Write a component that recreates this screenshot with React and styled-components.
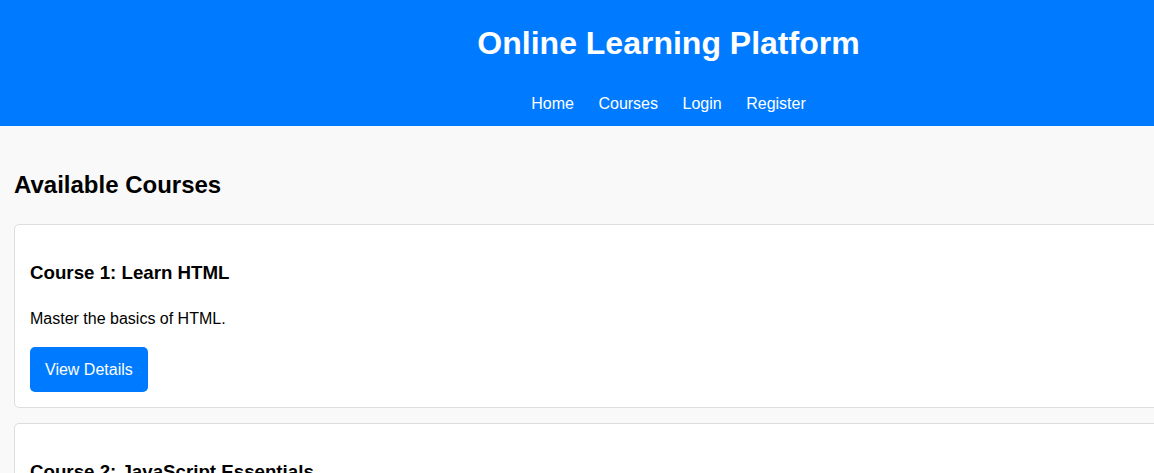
import styled, { createGlobalStyle } from "styled-components";

const GlobalStyle = createGlobalStyle`
  html, body {
    margin: 0;
    padding: 0;
    overflow-x: hidden;
    background: #f9f9f9;
  }
  body {
    font-family: "Liberation Sans", Arial, sans-serif;
    color: #000;
  }
`;

const Page = styled.div`
  width: 1337px;
  min-height: 100vh;
  background: #f9f9f9;
`;

const Header = styled.header`
  background: #007bff;
  color: #fff;
  text-align: center;
  padding: 25px 0 13px;
`;

const Title = styled.h1`
  margin: 0;
  font-size: 32px;
  line-height: 37px;
  font-weight: bold;
`;

const Nav = styled.nav`
  display: flex;
  justify-content: center;
  gap: 24.5px;
  margin-top: 33px;
  line-height: 18px;
`;

const NavLink = styled.a`
  color: #fff;
  text-decoration: none;
  font-size: 16px;
`;

const Main = styled.main`
  padding: 45px 14px 0;
`;

const SectionTitle = styled.h2`
  margin: 0 0 25px;
  font-size: 24px;
  line-height: 28px;
  font-weight: bold;
`;

const Card = styled.div`
  background: #fff;
  border: 1px solid #ddd;
  border-radius: 5px;
  padding: 15px;
  margin-bottom: 15px;
`;

const CourseTitle = styled.h3`
  margin: 22px 0 0;
  font-size: 18.72px;
  line-height: 22px;
  font-weight: bold;
`;

const Description = styled.p`
  margin: 26px 0 19px;
  font-size: 16px;
`;

const Button = styled.a`
  display: inline-block;
  background: #007bff;
  color: #fff;
  text-decoration: none;
  font-size: 16px;
  line-height: 19px;
  padding: 13px 15px;
  border-radius: 5px;
`;

const courses = [
  { title: "Course 1: Learn HTML", text: "Master the basics of HTML." },
  { title: "Course 2: JavaScript Essentials", text: "Learn the fundamentals of JavaScript." },
  { title: "Course 3: CSS Styling", text: "Style beautiful web pages with CSS." },
];

export default function App() {
  return (
    <Page>
      <GlobalStyle />
      <Header>
        <Title>Online Learning Platform</Title>
        <Nav>
          <NavLink href="#">Home</NavLink>
          <NavLink href="#">Courses</NavLink>
          <NavLink href="#">Login</NavLink>
          <NavLink href="#">Register</NavLink>
        </Nav>
      </Header>
      <Main>
        <SectionTitle>Available Courses</SectionTitle>
        {courses.map((c) => (
          <Card key={c.title}>
            <CourseTitle>{c.title}</CourseTitle>
            <Description>{c.text}</Description>
            <Button href="#">View Details</Button>
          </Card>
        ))}
      </Main>
    </Page>
  );
}
